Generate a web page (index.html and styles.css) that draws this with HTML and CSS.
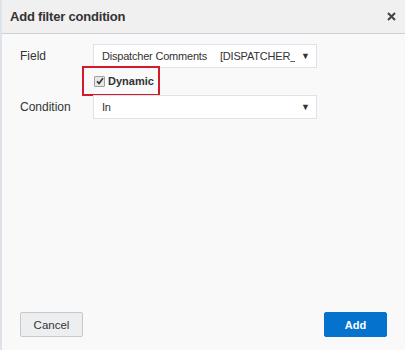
FILE: index.html
```html
<!DOCTYPE html>
<html lang="en">
<head>
    <meta charset="UTF-8">
    <title>Add filter condition</title>
    <link rel="stylesheet" href="styles.css">
</head>
<body>
    <div class="dialog">
        <div class="dialog-header">
            <span class="dialog-title">Add filter condition</span>
            <span class="close">
                <svg width="9" height="9" viewBox="0 0 9 9"><path d="M1 1 L8 8 M8 1 L1 8" stroke="#444" stroke-width="2"/></svg>
            </span>
        </div>
        <div class="dialog-body">
            <div class="row">
                <label class="label">Field</label>
                <div class="select">
                    <span class="select-text">Dispatcher Comments<span class="column-name">[DISPATCHER_COMMENTS]</span></span>
                    <span class="caret">&#9660;</span>
                </div>
            </div>
            <div class="dynamic-row">
                <div class="highlight">
                    <span class="checkbox">
                        <svg width="8" height="8" viewBox="0 0 8 8"><path d="M1 4.2 L3 6.4 L7 1.2" fill="none" stroke="#333" stroke-width="1.6"/></svg>
                    </span>
                    <span class="dynamic-label">Dynamic</span>
                </div>
            </div>
            <div class="row">
                <label class="label">Condition</label>
                <div class="select">
                    <span class="select-text">In</span>
                    <span class="caret">&#9660;</span>
                </div>
            </div>
        </div>
        <div class="dialog-footer">
            <button class="btn btn-cancel">Cancel</button>
            <button class="btn btn-add">Add</button>
        </div>
    </div>
</body>
</html>
```

FILE: styles.css
```css
body {
    margin: 0;
    font-family: "Liberation Sans", Arial, sans-serif;
    color: #333;
}
.dialog {
    width: 405px;
    height: 350px;
    display: flex;
    flex-direction: column;
    background-color: #f9f9f9;
    border-left: 2px solid #dde3e8;
    box-sizing: border-box;
}
.dialog-header {
    height: 34px;
    box-sizing: border-box;
    background-color: #f0f0f0;
    border-bottom: 1px solid #c9d1da;
    display: flex;
    align-items: center;
    justify-content: space-between;
    padding: 0 9px 0 8px;
}
.dialog-title {
    font-size: 13px;
    font-weight: bold;
    letter-spacing: -0.2px;
    color: #333;
}
.close {
    display: flex;
}
.dialog-body {
    flex: 1;
    padding: 10px 0 0 18px;
}
.row {
    display: flex;
    align-items: center;
}
.label {
    width: 73px;
    font-size: 12px;
    color: #333;
}
.select {
    width: 224px;
    height: 24px;
    box-sizing: border-box;
    background-color: #fff;
    border: 1px solid #dfe3e7;
    display: flex;
    align-items: center;
    padding: 0 6px 0 8px;
    overflow: hidden;
}
.select-text {
    flex: 1;
    min-width: 0;
    font-size: 11px;
    letter-spacing: -0.2px;
    color: #333;
    white-space: nowrap;
    overflow: hidden;
}
.column-name {
    margin-left: 13px;
}
.caret {
    font-size: 9px;
    color: #333;
    margin-left: 6px;
}
.dynamic-row {
    display: flex;
    padding-left: 62px;
    height: 27px;
}
.highlight {
    width: 78px;
    height: 30px;
    box-sizing: border-box;
    border: 2px solid #d51b2a;
    margin-top: -2px;
    display: flex;
    align-items: center;
    padding-left: 10px;
}
.checkbox {
    width: 9px;
    height: 9px;
    border: 1px solid #a0a0a0;
    background-color: #e8e8e8;
    border-radius: 1px;
    display: flex;
    align-items: center;
    justify-content: center;
    margin-right: 3px;
}
.dynamic-label {
    font-size: 11px;
    font-weight: bold;
    color: #333;
}
.dialog-footer {
    display: flex;
    justify-content: space-between;
    padding: 0 18px 13px 18px;
}
.btn {
    height: 25px;
    font-family: "Liberation Sans", Arial, sans-serif;
    font-size: 11.5px;
    border-radius: 2px;
    cursor: pointer;
}
.btn-cancel {
    width: 63px;
    background-color: #eceef0;
    border: 1px solid #c4c9ce;
    color: #333;
}
.btn-add {
    width: 63px;
    background-color: #0572ce;
    border: 1px solid #0572ce;
    color: #fff;
    font-size: 11px;
    font-weight: bold;
}
```
